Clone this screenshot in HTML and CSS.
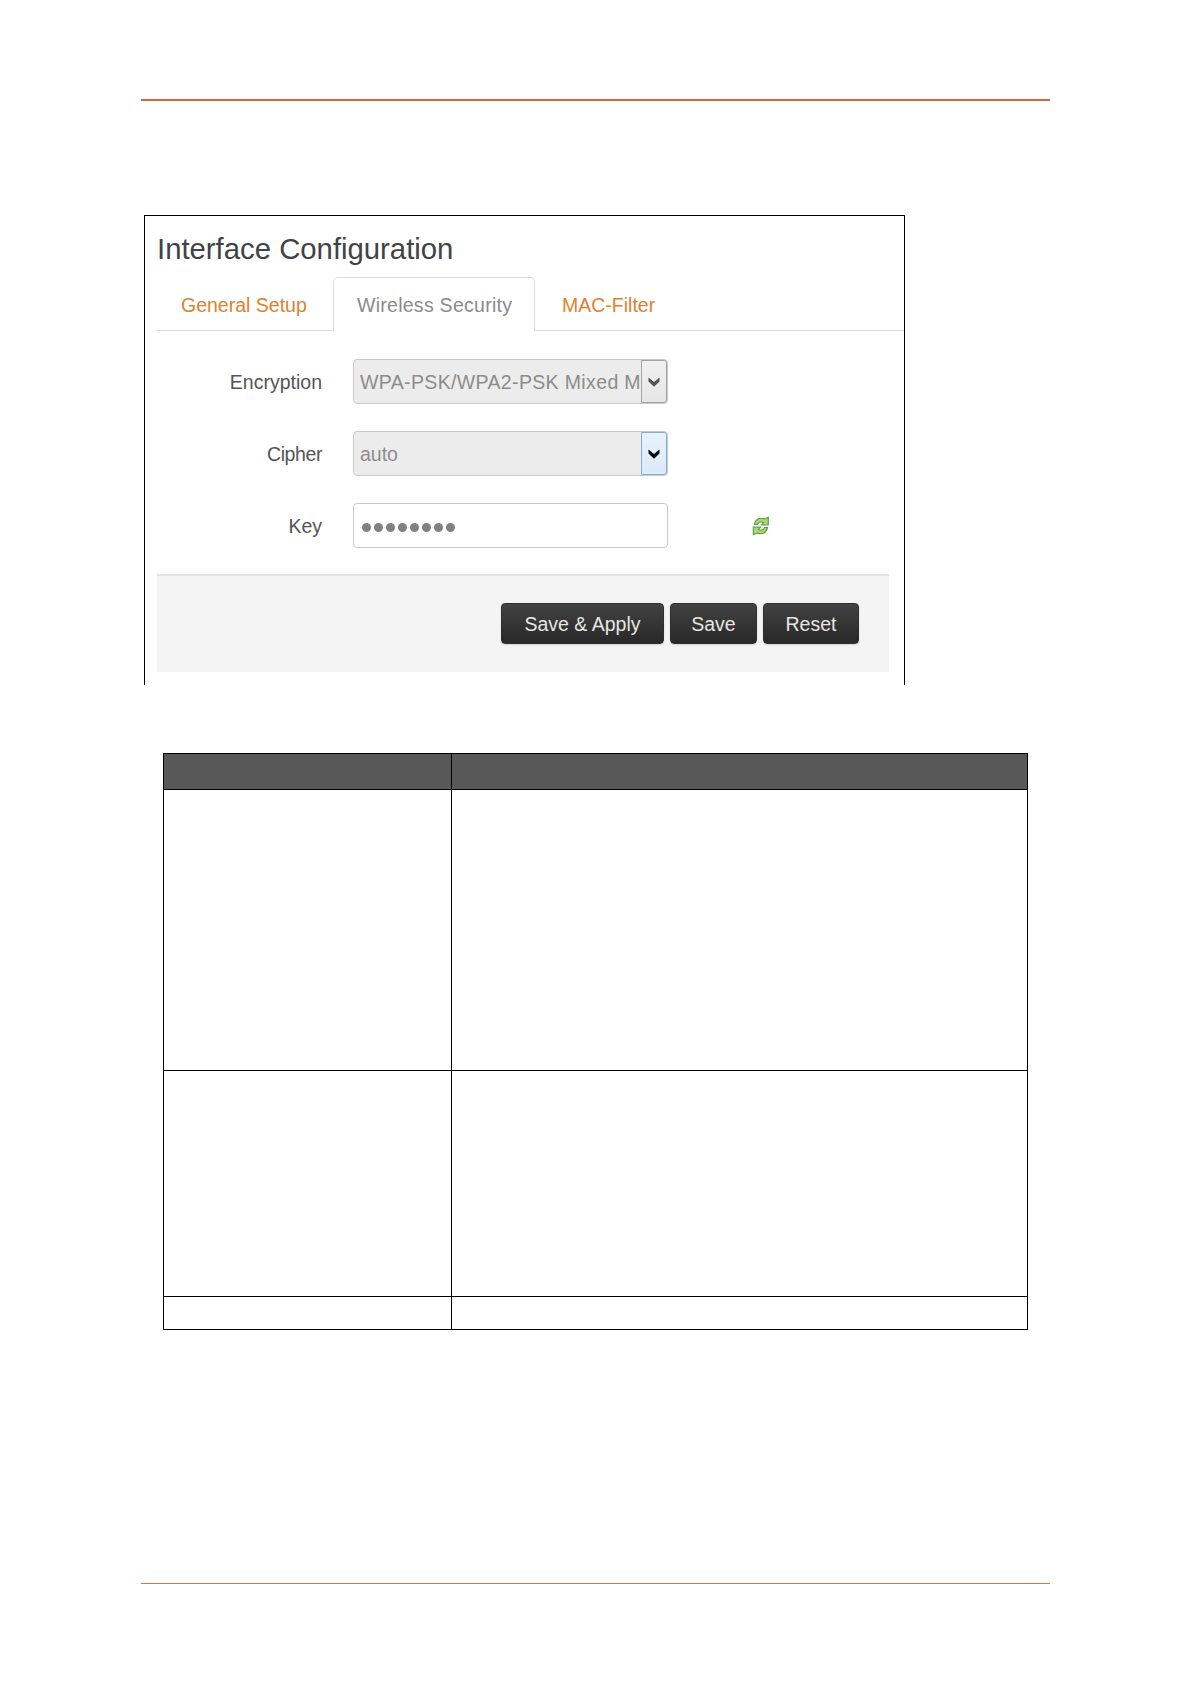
FILE: index.html
```html
<!DOCTYPE html>
<html lang="en">
<head>
<meta charset="utf-8">
<title>Interface Configuration</title>
<link rel="stylesheet" href="styles.css">
</head>
<body>
<div class="page">
  <header class="rule rule-top"></header>
  <section class="panel">
    <h1 class="title">Interface Configuration</h1>
    <nav class="tabs">
      <a class="tab tab-general">General Setup</a>
      <a class="tab tab-active">Wireless Security</a>
      <a class="tab tab-mac">MAC-Filter</a>
      <span class="tab-fill"></span>
    </nav>
    <div class="form">
      <div class="row">
        <span class="label">Encryption</span>
        <div class="field select">
          <span class="value value-long">WPA-PSK/WPA2-PSK Mixed M</span>
          <span class="arrow"><svg width="12" height="10" viewBox="0 0 12 10"><path d="M.5.6 6 5 11.500.6V4.400L6 9.800.5 4.400Z" fill="#555"/></svg></span>
        </div>
      </div>
      <div class="row">
        <span class="label label-tight">Cipher</span>
        <div class="field select">
          <span class="value">auto</span>
          <span class="arrow arrow-hot"><svg width="12" height="10" viewBox="0 0 12 10"><path d="M.5.6 6 5 11.500.6V4.400L6 9.800.5 4.400Z" fill="#050505"/></svg></span>
        </div>
      </div>
      <div class="row">
        <span class="label">Key</span>
        <div class="field input">
          <span class="dots"><i></i><i></i><i></i><i></i><i></i><i></i><i></i><i></i></span>
        </div>
        <svg class="refresh" width="18" height="20" viewBox="0 0 18 20">
          <path d="M2.500 8.500C3 3.500 8 .8 12.500 3L16.300 1.300V9H9.500L11.500 6.500C8.500 5.200 6 6.300 5.500 8.500Z" fill="#a5d678" stroke="#5c9a42" stroke-width="1.100"/>
          <path d="M15.500 11.500C15 16.500 10 19.200 5.500 17L1.300 18.700V11H8.500L6.500 13.500C9.500 14.800 12 13.700 12.500 11.500Z" fill="#a5d678" stroke="#5c9a42" stroke-width="1.100"/>
        </svg>
      </div>
    </div>
    <footer class="actions">
      <button class="btn btn-apply">Save &amp; Apply</button>
      <button class="btn btn-save">Save</button>
      <button class="btn btn-reset">Reset</button>
    </footer>
  </section>
  <table class="grid">
    <colgroup><col class="col-name"><col class="col-text"></colgroup>
    <tr class="head"><th></th><th></th></tr>
    <tr class="r1"><td></td><td></td></tr>
    <tr class="r2"><td></td><td></td></tr>
    <tr class="r3"><td></td><td></td></tr>
  </table>
  <div class="rule rule-bottom"></div>
</div>
</body>
</html>
```
FILE: styles.css
```css
* { box-sizing: border-box; }
body {
  margin: 0;
  background: #fff;
  font-family: "Liberation Sans", Arial, sans-serif;
  font-size: 19.5px;
  color: #555;
}
.page {
  width: 1191px;
  height: 1684px;
  padding: 99px 141px 0;
  display: flex;
  flex-direction: column;
}
.rule { flex: none; background: #cb6a3a; }
.rule-top { height: 2px; }
.rule-bottom { height: 1px; margin-top: 253px; background: #c47e4e; }
.panel {
  flex: none;
  width: 761px;
  height: 470px;
  margin: 114px 0 0 3px;
  padding-left: 12px;
  border: 1px solid #000;
  border-bottom: 0;
}
.title {
  margin: 0;
  height: 61px;
  padding-top: 16px;
  font-size: 29.3px;
  line-height: 34px;
  font-weight: 400;
  color: #404346;
  white-space: nowrap;
}
.tabs { display: flex; height: 54px; }
.tab {
  border-bottom: 1px solid #dcdcdc;
  line-height: 56px;
  white-space: nowrap;
  color: #dd8230;
}
.tab-general { width: 176px; padding-left: 24px; }
.tab-active {
  width: 202px;
  padding-left: 23px;
  border: 1px solid #dcdcdc;
  border-bottom: 0;
  border-radius: 5px 5px 0 0;
  line-height: 54px;
  letter-spacing: .27px;
  color: #8a8a8e;
}
.tab-mac { width: 121px; padding-left: 27px; }
.tab-fill { flex: 1; border-bottom: 1px solid #dcdcdc; }
.form {
  display: flex;
  flex-direction: column;
  gap: 27px;
  padding-top: 28px;
}
.row { display: flex; align-items: center; height: 45px; }
.label { width: 165px; margin-right: 31px; padding-top: 1px; text-align: right; line-height: 45px; }
.label-tight { letter-spacing: -.4px; }
.field {
  display: flex;
  align-items: center;
  justify-content: space-between;
  width: 315px;
  height: 45px;
  padding-left: 6px;
  border: 1px solid #c9c9c9;
  border-radius: 4px;
  background: #fff;
  color: #8c8c8c;
}
.select { background: #ececec; }
.value { padding-top: 1px; line-height: 43px; white-space: nowrap; }
.value-long { letter-spacing: .36px; }
.arrow {
  display: flex;
  align-items: center;
  justify-content: center;
  flex: none;
  width: 26px;
  height: 43px;
  border: 1px solid #a2a2a2;
  border-radius: 0 3px 3px 0;
  background: linear-gradient(#f1f1f1, #e6e6e6);
}
.arrow-hot { border-color: #86aed2; background: linear-gradient(#e8f3fd, #d9eafa); }
.dots { display: flex; gap: 3px; padding: 3px 0 0 2px; }
.dots i { width: 9px; height: 9px; border-radius: 50%; background: #808080; }
.refresh { margin-left: 84px; }
.actions {
  display: flex;
  gap: 6px;
  width: 732px;
  height: 98px;
  margin-top: 26px;
  padding: 27px 0 0 344px;
  border-top: 2px solid #e4e4e4;
  background: #f4f4f4;
}
.btn {
  height: 41px;
  padding: 0;
  border: 1px solid #2f2f2f;
  border-radius: 4px;
  background: linear-gradient(#424242, #282828);
  font: 19.5px/38px "Liberation Sans", Arial, sans-serif;
  color: #e8e6e2;
  box-shadow: 0 1px 2px rgba(0, 0, 0, .15);
}
.btn-apply { width: 163px; }
.btn-save { width: 87px; }
.btn-reset { width: 96px; }
.grid {
  flex: none;
  width: 865px;
  margin: 68px 0 0 22px;
  table-layout: fixed;
  border-collapse: collapse;
}
.col-name { width: 288px; }
.col-text { width: 576px; }
.grid th, .grid td { padding: 0; border: 1px solid #000; }
.head { height: 36px; background: #585858; }
.r1 { height: 281px; }
.r2 { height: 226px; }
.r3 { height: 33px; }
```
